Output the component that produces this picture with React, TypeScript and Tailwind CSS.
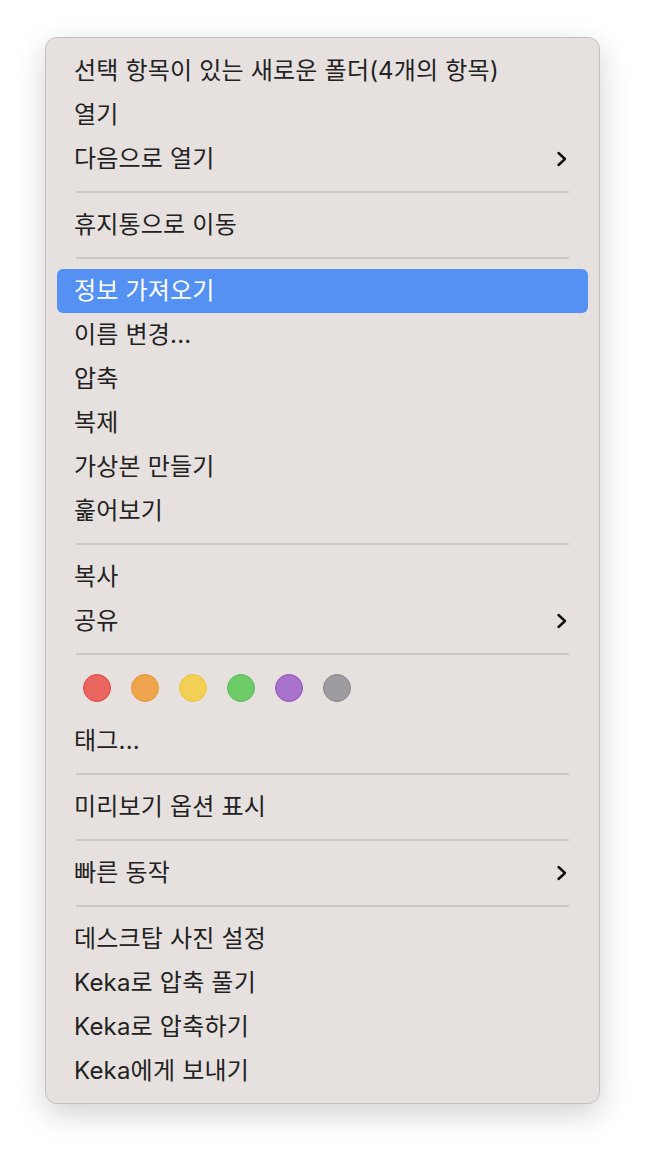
import React from "react";

type Entry =
  | { kind: "item"; label: string; submenu?: boolean; active?: boolean }
  | { kind: "sep" }
  | { kind: "tags" };

const entries: Entry[] = [
  { kind: "item", label: "선택 항목이 있는 새로운 폴더(4개의 항목)" },
  { kind: "item", label: "열기" },
  { kind: "item", label: "다음으로 열기", submenu: true },
  { kind: "sep" },
  { kind: "item", label: "휴지통으로 이동" },
  { kind: "sep" },
  { kind: "item", label: "정보 가져오기", active: true },
  { kind: "item", label: "이름 변경..." },
  { kind: "item", label: "압축" },
  { kind: "item", label: "복제" },
  { kind: "item", label: "가상본 만들기" },
  { kind: "item", label: "훑어보기" },
  { kind: "sep" },
  { kind: "item", label: "복사" },
  { kind: "item", label: "공유", submenu: true },
  { kind: "sep" },
  { kind: "tags" },
  { kind: "item", label: "태그..." },
  { kind: "sep" },
  { kind: "item", label: "미리보기 옵션 표시" },
  { kind: "sep" },
  { kind: "item", label: "빠른 동작", submenu: true },
  { kind: "sep" },
  { kind: "item", label: "데스크탑 사진 설정" },
  { kind: "item", label: "Keka로 압축 풀기" },
  { kind: "item", label: "Keka로 압축하기" },
  { kind: "item", label: "Keka에게 보내기" },
];

const tagColors = [
  "bg-[#e8665f] border-[#e1463e]",
  "bg-[#eda44c] border-[#ea9431]",
  "bg-[#f2cf55] border-[#efc33d]",
  "bg-[#6dcb68] border-[#56c051]",
  "bg-[#a772cc] border-[#9450c4]",
  "bg-[#9c9b9f] border-[#87868a]",
];

function Chevron() {
  return (
    <svg width="12" height="16" viewBox="0 0 12 16" fill="none">
      <path d="M2.5 2 L9 8 L2.5 14" stroke="#111" strokeWidth="2.4" strokeLinecap="round" strokeLinejoin="round" />
    </svg>
  );
}

export default function App() {
  return (
    <div className="min-h-[1156px] bg-white pt-[37px] pl-[45px] font-['Inter','Noto_Sans_CJK_KR',sans-serif]">
      <div className="w-[555px] rounded-[12px] border border-[#c4c0be] bg-[#e6e1df] pt-[11px] pb-[10px] shadow-[0_10px_30px_rgba(0,0,0,0.18)]">
        {entries.map((e, i) => {
          if (e.kind === "sep") {
            return (
              <div key={i} className="mx-[30px] flex h-[22px] items-center">
                <div className="h-[2px] w-full bg-[#cdc8c6]" />
              </div>
            );
          }
          if (e.kind === "tags") {
            return (
              <div key={i} className="flex h-[54px] items-center gap-[20px] pb-[8px] pl-[37px]">
                {tagColors.map((c) => (
                  <div key={c} className={`h-[28px] w-[28px] rounded-full border-[1.5px] ${c}`} />
                ))}
              </div>
            );
          }
          return (
            <div
              key={i}
              className={`mx-[11px] flex h-[44px] items-center justify-between rounded-[6px] pl-[17px] pr-[20px] text-[24px] tracking-[0.2px] ${
                e.active ? "bg-[#5591f2] text-white" : "text-[#222]"
              }`}
            >
              <span>{e.label}</span>
              {e.submenu && <Chevron />}
            </div>
          );
        })}
      </div>
    </div>
  );
}
